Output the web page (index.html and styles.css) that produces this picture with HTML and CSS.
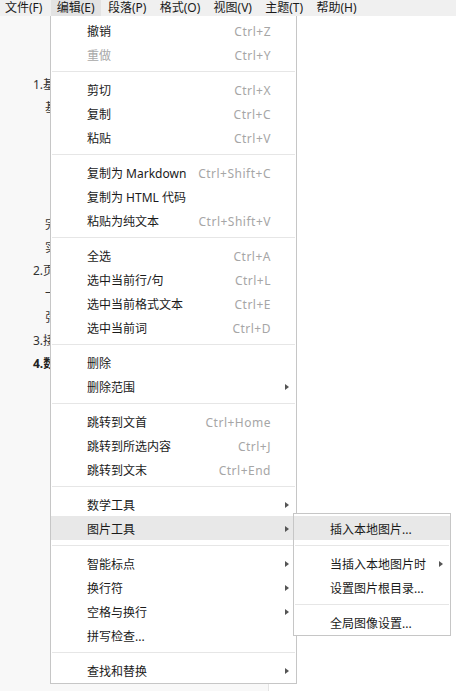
FILE: index.html
```html
<!DOCTYPE html>
<html lang="zh-CN">
<head>
<meta charset="utf-8">
<title>编辑菜单</title>
<link rel="stylesheet" href="styles.css">
</head>
<body>
<div class="app">
  <nav class="menubar">
    <span class="mb-item">文件(F)</span>
    <span class="mb-item active">编辑(E)</span>
    <span class="mb-item">段落(P)</span>
    <span class="mb-item">格式(O)</span>
    <span class="mb-item">视图(V)</span>
    <span class="mb-item">主题(T)</span>
    <span class="mb-item">帮助(H)</span>
  </nav>
  <div class="workspace">
    <aside class="sidebar">
      <div class="toc l1">1.基本语法</div>
      <div class="toc l2">基本格式</div>
      <div class="toc l3">标题</div>
      <div class="toc l3">段落</div>
      <div class="toc l3">列表</div>
      <div class="toc l3">引用</div>
      <div class="toc l2">完整示例</div>
      <div class="toc l2">实用技巧</div>
      <div class="toc l1">2.页面布局</div>
      <div class="toc l2">一般设置</div>
      <div class="toc l2">张贴说明</div>
      <div class="toc l1">3.接口文档</div>
      <div class="toc l1 bold">4.数据结构</div>
    </aside>
    <main class="editor"></main>
  </div>

  <div class="menu main-menu">
    <div class="mi"><span class="lbl">撤销</span><span class="sc">Ctrl+Z</span><span class="ar"></span></div>
    <div class="mi disabled"><span class="lbl">重做</span><span class="sc">Ctrl+Y</span><span class="ar"></span></div>
    <div class="sep"></div>
    <div class="mi"><span class="lbl">剪切</span><span class="sc">Ctrl+X</span><span class="ar"></span></div>
    <div class="mi"><span class="lbl">复制</span><span class="sc">Ctrl+C</span><span class="ar"></span></div>
    <div class="mi"><span class="lbl">粘贴</span><span class="sc">Ctrl+V</span><span class="ar"></span></div>
    <div class="sep"></div>
    <div class="mi"><span class="lbl">复制为 Markdown</span><span class="sc">Ctrl+Shift+C</span><span class="ar"></span></div>
    <div class="mi"><span class="lbl">复制为 HTML 代码</span><span class="sc"></span><span class="ar"></span></div>
    <div class="mi"><span class="lbl">粘贴为纯文本</span><span class="sc">Ctrl+Shift+V</span><span class="ar"></span></div>
    <div class="sep"></div>
    <div class="mi"><span class="lbl">全选</span><span class="sc">Ctrl+A</span><span class="ar"></span></div>
    <div class="mi"><span class="lbl">选中当前行/句</span><span class="sc">Ctrl+L</span><span class="ar"></span></div>
    <div class="mi"><span class="lbl">选中当前格式文本</span><span class="sc">Ctrl+E</span><span class="ar"></span></div>
    <div class="mi"><span class="lbl">选中当前词</span><span class="sc">Ctrl+D</span><span class="ar"></span></div>
    <div class="sep"></div>
    <div class="mi"><span class="lbl">删除</span><span class="sc"></span><span class="ar"></span></div>
    <div class="mi"><span class="lbl">删除范围</span><span class="sc"></span><span class="ar"><i class="tri"></i></span></div>
    <div class="sep"></div>
    <div class="mi"><span class="lbl">跳转到文首</span><span class="sc">Ctrl+Home</span><span class="ar"></span></div>
    <div class="mi"><span class="lbl">跳转到所选内容</span><span class="sc">Ctrl+J</span><span class="ar"></span></div>
    <div class="mi"><span class="lbl">跳转到文末</span><span class="sc">Ctrl+End</span><span class="ar"></span></div>
    <div class="sep"></div>
    <div class="mi"><span class="lbl">数学工具</span><span class="sc"></span><span class="ar"><i class="tri"></i></span></div>
    <div class="mi hover"><span class="lbl">图片工具</span><span class="sc"></span><span class="ar"><i class="tri"></i></span></div>
    <div class="sep"></div>
    <div class="mi"><span class="lbl">智能标点</span><span class="sc"></span><span class="ar"><i class="tri"></i></span></div>
    <div class="mi"><span class="lbl">换行符</span><span class="sc"></span><span class="ar"><i class="tri"></i></span></div>
    <div class="mi"><span class="lbl">空格与换行</span><span class="sc"></span><span class="ar"><i class="tri"></i></span></div>
    <div class="mi"><span class="lbl">拼写检查...</span><span class="sc"></span><span class="ar"></span></div>
    <div class="sep"></div>
    <div class="mi"><span class="lbl">查找和替换</span><span class="sc"></span><span class="ar"><i class="tri"></i></span></div>
  </div>

  <div class="menu sub-menu">
    <div class="mi hover"><span class="lbl">插入本地图片...</span><span class="ar"></span></div>
    <div class="sep"></div>
    <div class="mi"><span class="lbl">当插入本地图片时</span><span class="ar"><i class="tri"></i></span></div>
    <div class="mi"><span class="lbl">设置图片根目录...</span><span class="ar"></span></div>
    <div class="sep"></div>
    <div class="mi"><span class="lbl">全局图像设置...</span><span class="ar"></span></div>
  </div>
</div>
</body>
</html>
```

FILE: styles.css
```css
* { box-sizing: border-box; }
html, body { margin: 0; padding: 0; }
body {
  font-family: "Noto Sans", "Noto Sans CJK SC", sans-serif;
  font-size: 12px;
  color: #1a1a1a;
  background: #fff;
}
.app {
  position: relative;
  width: 456px;
  height: 691px;
  overflow: hidden;
}
.menubar {
  display: flex;
  height: 16px;
  line-height: 16px;
  background: #f0f0f0;
  white-space: nowrap;
}
.mb-item {
  padding: 0 6px 0 5px;
  margin-right: 2.3px;
}
.mb-item.active { background: #e3e3e3; padding: 0 6px 0 6px; }

.workspace {
  display: flex;
  height: 675px;
}
.sidebar {
  width: 269px;
  background: #f8f8f8;
  border-right: 1px solid #e4e4e4;
  padding-top: 57px;
}
.toc {
  height: 23.25px;
  line-height: 23.25px;
  white-space: nowrap;
  color: #333;
}
.toc.l1 { padding-left: 33px; }
.toc.l2 { padding-left: 45px; }
.toc.l3 { padding-left: 57px; }
.toc.bold { font-weight: 700; color: #222; }
.editor { flex: 1; background: #fff; }

.menu {
  position: absolute;
  background: #fff;
  border: 1px solid #c6c6c6;
}
.main-menu {
  left: 50px;
  top: 16px;
  width: 247px;
  border-top: none;
  padding: 2px 0 1px;
}
.sub-menu {
  left: 293px;
  top: 513px;
  width: 158px;
  padding: 2px 0 1px;
  z-index: 2;
}
.mi {
  display: flex;
  align-items: center;
  height: 24px;
  padding: 2px 7px 0 36px;
  white-space: nowrap;
}
.mi.hover { background: #e8e8e8; }
.mi.disabled .lbl { color: #a8a8a8; }
.lbl { flex: 1; }
.sc { color: #a6a6a6; letter-spacing: 0.5px; }
.ar {
  width: 18px;
  display: flex;
  justify-content: flex-end;
}
.sub-menu .ar { width: 14px; }
.tri {
  display: block;
  width: 0;
  height: 0;
  border-left: 4px solid #555;
  border-top: 3.5px solid transparent;
  border-bottom: 3.5px solid transparent;
}
.sep {
  height: 1px;
  margin: 5px 1px;
  background: #e6e6e6;
}
```
